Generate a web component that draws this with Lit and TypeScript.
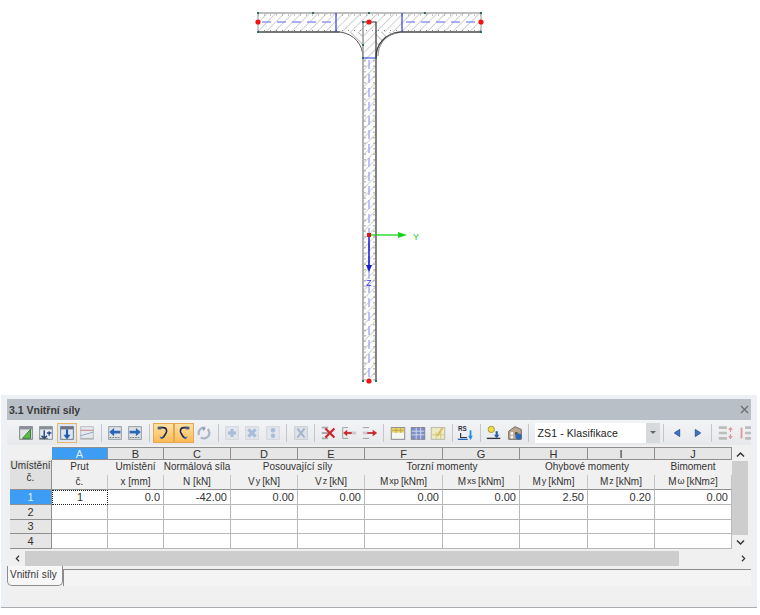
import { LitElement, html, css, svg } from "lit";
import { customElement } from "lit/decorators.js";

const box = (fill: string, stroke: string, extra: any = svg``) => svg`<rect x="3" y="3" width="14" height="14" fill="${fill}" stroke="${stroke}"/>${extra}`;
const tableTop = svg`<rect x="3" y="3" width="14" height="3" fill="#8a9098"/>`;
const ICONS: Record<string, any> = {
  tri: svg`${box("#dfe3e6", "#6f7880", tableTop)}<path d="M6 16 15 6v10z" fill="#5cb84a" stroke="#2f7d2a"/>`,
  plusTbl: svg`${box("#e8ecf0", "#7b8590", tableTop)}<path d="M8 7v8M5 13l3 3 3-3" fill="none" stroke="#23477f" stroke-width="1.6"/><path d="M11 10h5M13.500 8v5" stroke="#23477f" stroke-width="1.4"/><path d="M3 16h9" stroke="#555"/>`,
  downTbl: svg`<rect x="3" y="3" width="14" height="3" fill="#6b7480"/><rect x="3" y="3" width="14" height="14" fill="none" stroke="#67717c"/><path d="M10 6v9" stroke="#1f5cae" stroke-width="2.4"/><path d="M6 12l4 5 4-5z" fill="#1f5cae"/>`,
  lineTbl: svg`${box("#e6e8ec", "#b4b9bf")}<path d="M3 7h14" stroke="#c07c7c"/><path d="M3 13 17 9" stroke="#8aa0c8"/><path d="M3 16h14" stroke="#aaa"/>`,
  left: svg`${box("#dfe3e6", "#8a929a")}<path d="M16 9H8" stroke="#2a67b8" stroke-width="3"/><path d="M9 4.500 3.500 9 9 13.500z" fill="#2a67b8"/><path d="M4 15h12" stroke="#777" stroke-dasharray="2 1"/>`,
  right: svg`${box("#dfe3e6", "#8a929a")}<path d="M4 9h8" stroke="#2a67b8" stroke-width="3"/><path d="M11 4.500 16.500 9 11 13.500z" fill="#2a67b8"/><path d="M4 15h12" stroke="#777" stroke-dasharray="2 1"/>`,
  curveR: svg`<path d="M6 4h4c3 0 4 2 4 4s-2 4-3 6l-3 2" fill="none" stroke="#1d2c4c" stroke-width="1.800"/><rect x="4" y="3" width="4" height="3" fill="#4a5a78"/><path d="M6 14l2 3 2-2" fill="#2a67b8"/>`,
  curveL: svg`<path d="M14 4h-4C7 4 6 6 6 8s2 4 3 6l3 2" fill="none" stroke="#1d2c4c" stroke-width="1.800"/><rect x="12" y="3" width="4" height="3" fill="#4a5a78"/><path d="M14 14l-2 3-2-2" fill="#2a67b8"/>`,
  spin: svg`<circle cx="10" cy="10" r="6" fill="none" stroke="#a9b6c6" stroke-width="2.500" stroke-dasharray="13 3"/><path d="M8 3l4 2-3 3z" fill="#8ea0b8"/>`,
  dPlus: svg`${box("#e3e6ea", "#cfd4da")}<path d="M10 5.500v9M5.500 10h9" stroke="#a8bcdc" stroke-width="3.500"/>`,
  dCross: svg`${box("#e3e6ea", "#cfd4da")}<path d="M6 6l8 8M14 6l-8 8" stroke="#a8bcdc" stroke-width="3.500"/>`,
  dDots: svg`${box("#e3e6ea", "#cfd4da")}<circle cx="10" cy="7" r="2.500" fill="#a8bcdc"/><circle cx="10" cy="13" r="2.500" fill="#a8bcdc"/>`,
  dX: svg`${box("#dfe3e8", "#c2c8cf")}<path d="M6 5l8 10M14 5 6 15" stroke="#a0b2cc" stroke-width="2.200"/>`,
  redX: svg`<path d="M2 4h7M2 10h7M2 16h7" stroke="#aaa" stroke-width="2"/><path d="M6 5l10 10M16 5 6 15" stroke="#c92a32" stroke-width="2.600"/>`,
  redL: svg`<path d="M3 4h6M3 16h6M3 4v12" stroke="#999" fill="none"/><path d="M7 10h11" stroke="#c9c9c9" stroke-width="3"/><path d="M13 10H6" stroke="#c92a32" stroke-width="2"/><path d="M8 6.500 3.500 10 8 13.500z" fill="#c92a32"/>`,
  redR: svg`<path d="M2 4h7M2 16h7" stroke="#999" fill="none"/><path d="M2 10h6" stroke="#c9c9c9" stroke-width="3"/><path d="M7 10h7" stroke="#c92a32" stroke-width="2"/><path d="M13 6.500 18 10l-5 3.500z" fill="#c92a32"/>`,
  yTbl: svg`<rect x="2.500" y="4" width="15" height="13" fill="#f7f7f2" stroke="#7c7f86"/><rect x="3" y="4.500" width="14" height="5" fill="#e8d467"/><path d="M8 4v6M13 4v6M3 7h14" stroke="#a8954a" stroke-width=".7"/>`,
  bTbl: svg`<rect x="2.500" y="4" width="15" height="13" fill="#7d8fc8" stroke="#7c7f86"/><path d="M3 8h14M3 12h14M8 4v13M13 4v13" stroke="#d8def0"/>`,
  pTbl: svg`<rect x="2.500" y="4" width="15" height="13" fill="#eeeac8" stroke="#b5b5a0"/><path d="M3 12h14M8 9v8M13 9v8" stroke="#d3c679"/><path d="M8 13l6-9 2 1-6 9z" fill="#d9bf5a"/>`,
  rs: svg`<text class="ic" x="1" y="8">RS</text><path d="M4 10v5h7" fill="none" stroke="#334" stroke-width="1.300"/><path d="M1 17h11" stroke="#2a67b8" stroke-width="1.500"/><path d="M15 7v8" stroke="#1f8fe0" stroke-width="2"/><path d="M12.500 13l2.500 5 2.500-5z" fill="#1f8fe0"/>`,
  star: svg`<circle cx="7" cy="6" r="3.500" fill="#f1de47" stroke="#9c9430"/><path d="M2 16h15" stroke="#334" stroke-width="1.500"/><path d="M13 8v6" stroke="#2a5fa8" stroke-width="2.400"/><path d="M10 12l3 4 3-4z" fill="#2a5fa8"/>`,
  house: svg`<path d="M3 8 10 3l7 3v11H3z" fill="#b9a88f" stroke="#6b5f50"/><rect x="5" y="9" width="3" height="3" fill="#f4f4f4"/><rect x="5" y="13" width="3" height="3" fill="#f4f4f4"/><rect x="10" y="9" width="3" height="3" fill="#555"/><circle cx="14" cy="14" r="3.500" fill="#2a67b8"/>`,
  navL: svg`<path d="M13 6v8L7 10z" fill="#3f73c4" stroke="#2b559c"/>`,
  navR: svg`<path d="M7 6v8l6-4z" fill="#3f73c4" stroke="#2b559c"/>`,
  grA: svg`<path d="M2 4h9M2 10h9M2 16h9" stroke="#bcbcbc" stroke-width="3"/><path d="M15 4v5M15 11v5M13 6.500l2-2.500 2 2.500M13 13.500l2 2.500 2-2.500" fill="none" stroke="#dd9a9a" stroke-width="1.300"/>`,
  grB: svg`<path d="M9 4h9M9 10h9M9 16h9" stroke="#bcbcbc" stroke-width="3"/><path d="M5 4v12" stroke="#dd9a9a" stroke-width="2"/>`,
};

type Item = string | { i: string; c?: string };
const TOOL_A: Item[] = [
  { i: "tri" }, { i: "plusTbl" }, { i: "downTbl", c: "on1" }, { i: "lineTbl" }, "|",
  { i: "left" }, { i: "right" }, "|",
  { i: "curveR", c: "on" }, { i: "curveL", c: "on" }, { i: "spin" }, "|",
  { i: "dPlus" }, { i: "dCross" }, { i: "dDots" }, "|", { i: "dX" }, "|",
  { i: "redX" }, { i: "redL" }, { i: "redR" }, "|",
  { i: "yTbl" }, { i: "bTbl" }, { i: "pTbl" }, "|", { i: "rs" }, "|",
  { i: "star" }, { i: "house" }, "|",
];
const TOOL_B: Item[] = ["|", { i: "navL" }, { i: "navR" }, "|", { i: "grA" }, { i: "grB" }];

const LETTERS = "ABCDEFGHIJ".split("");
const VALUES = ["1", "0.0", "-42.00", "0.00", "0.00", "0.00", "0.00", "2.50", "0.20", "0.00"];

@customElement("app-root")
export class AppRoot extends LitElement {
  static styles = css`
    :host { display: block; width: 760px; height: 615px; background: #fff; font-family: "Liberation Sans", Arial, sans-serif; font-size: 10px; color: #333; overflow: hidden; }
    .canvas { display: block; width: 760px; height: 395px; }
    .canvas text { font-family: "Liberation Sans", sans-serif; font-size: 9px; }
    .frame { margin: 0 3px 0 1px; height: 213px; box-sizing: border-box; padding: 4px 6px 0 6px; background: #edf1f6; border-bottom: 1px solid #a9adb2; display: flex; flex-direction: column; }
    .title { height: 21px; flex: none; background: #b9bfc7; display: flex; align-items: center; justify-content: space-between; padding: 0 2px 0 2px; font-weight: bold; font-size: 10.500px; color: #3a3a3a; }
    .close { width: 9px; height: 9px; }
    .toolbar { height: 25px; flex: none; background: linear-gradient(#f3f4f6, #e6e8eb); display: flex; align-items: center; padding-left: 9px; overflow: hidden; }
    .btn { width: 20.300px; height: 20px; flex: none; display: flex; align-items: center; justify-content: center; box-sizing: border-box; }
    .btn svg { width: 18px; height: 18px; display: block; }
    .btn .ic { font-family: "Liberation Sans", sans-serif; font-size: 7px; font-weight: bold; fill: #334; }
    .on { background: linear-gradient(#ffe3a6, #fdb955); border: 1px solid #e2a952; }
    .on1 { background: #dde6f2; border: 1px solid #e8b868; }
    .sep { width: 1px; height: 18px; margin: 0 3.400px; background: #c3c6ca; flex: none; }
    .combo { width: 125px; height: 20px; flex: none; margin-left: 2px; background: #fff; display: flex; align-items: center; justify-content: space-between; font-size: 10.500px; color: #222; padding-left: 3px; box-sizing: border-box; letter-spacing: .1px; }
    .drop { width: 14px; height: 20px; background: #d7dadd; display: flex; align-items: center; justify-content: center; }
    .drop i { border: 3px solid transparent; border-top: 3px solid #666; border-bottom: 0; }
    .body { flex: none; background: #f0f0f0; padding: 2px 2px 0 3px; display: flex; gap: 1px; align-items: flex-start; }
    .grid { display: grid; grid-template-columns: 42px 56px 56px 67px 67px 67px 78px 77px 68px 67px 77px; grid-template-rows: 13px 15px 15px repeat(4, 14.750px); width: 721px; flex: none; background: #fff; }
    .grid > div { box-sizing: border-box; display: flex; align-items: center; justify-content: center; white-space: nowrap; }
    .corner { background: #f0f0f0; }
    .let { background: #e6e6e6; border: 1px solid #8f8f8f; border-width: 1px 1px 1px 0; font-size: 11px; }
    .let.sel { background: #3d9cf3; color: #dff0ff; }
    .umist { grid-row: 2 / 4; grid-column: 1; flex-direction: column; background: #e0e0e0; border-right: 1px solid #8f8f8f; border-bottom: 1px solid #8f8f8f; justify-content: flex-start !important; line-height: 12px; }
    .hd { background: #f0f0f0; padding-bottom: 2px; }
    .g { border-right: 1px solid #c4c4c4; }
    .s { border-right: 1px solid #c4c4c4; border-bottom: 1px solid #8f8f8f; }
    .nl { border-right-color: transparent; }
    sub { font-size: 9px; vertical-align: -2px; line-height: 0; margin: 0 2px 0 1px; }
    sup { font-size: 9px; vertical-align: 3px; line-height: 0; }
    .rh { background: #e6e6e6; border: 1px solid #8f8f8f; border-width: 0 1px 1px 0; font-size: 11px; }
    .rh.sel { background: #3d9cf3; color: #dff0ff; }
    .c { border-right: 1px solid #b8b8b8; border-bottom: 1px solid #b8b8b8; justify-content: flex-end !important; padding-right: 3px; font-size: 11px; }
    .c.focus { justify-content: center !important; border: 1px dotted #222; padding: 0; }
    .vbar { width: 16px; height: 102px; flex: none; display: flex; flex-direction: column; background: #f0f0f0; }
    .arrow { flex: none; display: flex; align-items: center; justify-content: center; height: 14px; }
    .arrow svg { width: 9px; height: 7px; display: block; }
    .thumb { background: #cdcdcd; flex: 1; }
    .hbar { height: 15px; padding: 2px 0 0 2px; display: flex; flex: none; background: #f0f0f0; }
    .hbar .arrow { width: 16px; height: 15px; }
    .hthumb { width: 654px; background: #cdcdcd; flex: none; }
    .hspace { flex: 1; }
    .tabs { display: flex; flex: none; height: 20px; background: #f0f0f0; }
    .tab { width: 56px; height: 20px; box-sizing: border-box; border: 1px solid #8c8c8c; border-top: 0; border-radius: 0 0 5px 5px; background: #f7f7f7; padding: 3px 0 0 2px; font-size: 10px; }
    .tabfill { flex: 1; height: 16px; margin-top: 3px; border-top: 1px solid #8c8c8c; border-left: 1px solid #8c8c8c; border-bottom: 1px solid #d8d8d8; background: #f4f4f4; }
    .status { flex: 1; background: #f0f0f0; }
  `;

  private tool(items: Item[]) {
    return items.map((it) =>
      typeof it === "string"
        ? html`<span class="sep"></span>`
        : html`<span class="btn ${it.c ?? ""}"><svg viewBox="0 0 20 20">${ICONS[it.i]}</svg></span>`
    );
  }

  private section() {
    const nodes = [[258, 13], [313, 13], [369, 13], [425, 13], [481, 13], [258, 32], [481, 32], [363, 22], [363, 45], [363, 58], [376, 58], [363, 381], [376, 381]];
    return svg`
      <defs>
        <pattern id="h" width="6" height="6" patternUnits="userSpaceOnUse" patternTransform="rotate(-45)">
          <rect width="6" height="6" fill="#fff"/><path d="M0 0H6" stroke="#b5b5b5" stroke-width="1.200"/>
        </pattern>
        <pattern id="f" width="5.500" height="5.500" patternUnits="userSpaceOnUse" patternTransform="rotate(45)">
          <rect width="5.500" height="5.500" fill="#fff"/><path d="M0 0H5.500" stroke="#777" stroke-width=".9"/>
        </pattern>
      </defs>
      <path d="M340 32C354 34 363 44 363 58H376C376 44 385 34 400 32Z" fill="url(#f)"/>
      <rect x="258" y="13" width="223" height="19" fill="url(#h)"/>
      <rect x="363" y="22" width="13" height="359" fill="url(#h)"/>
      <path d="M258 15H481M258 30.500H481" stroke="#8a8a8a" stroke-width="1" stroke-dasharray="1 5"/>
      <path d="M365 60V381M374 60V381" stroke="#999" stroke-width="1.200" stroke-dasharray="1.500 4"/>
      <path d="M258 13H481" stroke="#a9a9a9" stroke-width="1.500"/>
      <path d="M258 13V32M481 13V32" stroke="#9a9a9a"/>
      <path d="M258 32H340M400 32H481" stroke="#4a4a4a" stroke-width="1.300"/>
      <path d="M340 32C354 34 363 44 363 58" fill="none" stroke="#555"/>
      <path d="M400 32C385 34 376 44 376 58" fill="none" stroke="#444" stroke-width="1.300"/>
      <path d="M396 33C384 36 378 46 378 56" fill="none" stroke="#888"/>
      <path d="M363 22V381" stroke="#999" stroke-width="1.500"/>
      <path d="M363 22H376V381" fill="none" stroke="#333" stroke-width="1.200"/>
      <path d="M336 13V32M402 13V32M363 58H376" stroke="#2f3fe0" stroke-width="1.200"/>
      <path d="M262 22H332M406 22H477" stroke="#8d9bf0" stroke-width="1.300" stroke-dasharray="9 6"/>
      <path d="M369 60V378" stroke="#a8b0f5" stroke-width="1.500" stroke-dasharray="9 5"/>
      ${nodes.map(([x, y]) => svg`<rect x="${x - 1}" y="${y - 1}" width="2" height="2" fill="#2c6e6e"/>`)}
      <path d="M369 235H398" stroke="#19d219" stroke-width="1.300"/>
      <path d="M398 232V238L407 235Z" fill="#19d219"/>
      <text x="413" y="240" fill="#19d219">Y</text>
      <path d="M369 235V266" stroke="#1a1ad8" stroke-width="1.500"/>
      <path d="M366 265H372L369 272Z" fill="#1a1ad8"/>
      <text x="366" y="286" fill="#3a3ae0">Z</text>
      ${[[258, 22], [369, 22], [481, 22], [369, 381]].map(([x, y]) => svg`<circle cx="${x}" cy="${y}" r="2.600" fill="#f01515"/>`)}
      <rect x="367" y="233" width="4" height="4" fill="#e01515"/>
    `;
  }

  render() {
    return html`
      <svg class="canvas" viewBox="0 0 760 395">${this.section()}</svg>
      <div class="frame">
        <div class="title">
          <span>3.1 Vnitřní síly</span>
          <svg class="close" viewBox="0 0 9 9"><path d="M1 1l7 7M8 1 1 8" stroke="#6d6d6d" stroke-width="1.300"/></svg>
        </div>
        <div class="toolbar">
          ${this.tool(TOOL_A)}
          <div class="combo"><span>ZS1 - Klasifikace</span><span class="drop"><i></i></span></div>
          ${this.tool(TOOL_B)}
        </div>
        <div class="body">
          <div class="grid">
            <div class="corner"></div>
            ${LETTERS.map((l, i) => html`<div class="let ${i === 0 ? "sel" : ""}">${l}</div>`)}

            <div class="umist"><span>Umístění</span><span>č.</span></div>
            <div class="hd g nl">Prut</div>
            <div class="hd g nl">Umístění</div>
            <div class="hd g nl">Normálová síla</div>
            <div class="hd g nl" style="grid-column: span 2">Posouvající síly</div>
            <div class="hd g nl" style="grid-column: span 2">Torzní momenty</div>
            <div class="hd g nl" style="grid-column: span 2">Ohybové momenty</div>
            <div class="hd g nl">Bimoment</div>

            <div class="hd s">č.</div>
            <div class="hd s">x [mm]</div>
            <div class="hd s">N [kN]</div>
            <div class="hd s">V<sub>y</sub> [kN]</div>
            <div class="hd s">V<sub>z</sub> [kN]</div>
            <div class="hd s">M<sub>xp</sub> [kNm]</div>
            <div class="hd s">M<sub>xs</sub> [kNm]</div>
            <div class="hd s">M<sub>y</sub> [kNm]</div>
            <div class="hd s">M<sub>z</sub> [kNm]</div>
            <div class="hd s">M<sub>ω</sub> [kNm<sup>2</sup>]</div>

            <div class="rh sel">1</div>
            ${VALUES.map((v, i) => html`<div class="c ${i === 0 ? "focus" : ""}">${v}</div>`)}
            ${["2", "3", "4"].map(
              (r) => html`<div class="rh">${r}</div>${LETTERS.map(() => html`<div class="c"></div>`)}`
            )}
          </div>
          <div class="vbar">
            <div class="arrow"><svg viewBox="0 0 9 7"><path d="M1 5.500 4.500 2 8 5.500" fill="none" stroke="#333" stroke-width="1.500"/></svg></div>
            <div class="thumb"></div>
            <div class="arrow"><svg viewBox="0 0 9 7"><path d="M1 1.500 4.500 5 8 1.500" fill="none" stroke="#333" stroke-width="1.500"/></svg></div>
          </div>
        </div>
        <div class="hbar">
          <div class="arrow"><svg viewBox="0 0 7 9"><path d="M5.500 1 2 4.500 5.500 8" fill="none" stroke="#333" stroke-width="1.500"/></svg></div>
          <div class="hthumb"></div>
          <div class="hspace"></div>
          <div class="arrow"><svg viewBox="0 0 7 9"><path d="M1.500 1 5 4.500 1.500 8" fill="none" stroke="#333" stroke-width="1.500"/></svg></div>
        </div>
        <div class="tabs">
          <div class="tab">Vnitřní síly</div>
          <div class="tabfill"></div>
        </div>
        <div class="status"></div>
      </div>
    `;
  }
}
